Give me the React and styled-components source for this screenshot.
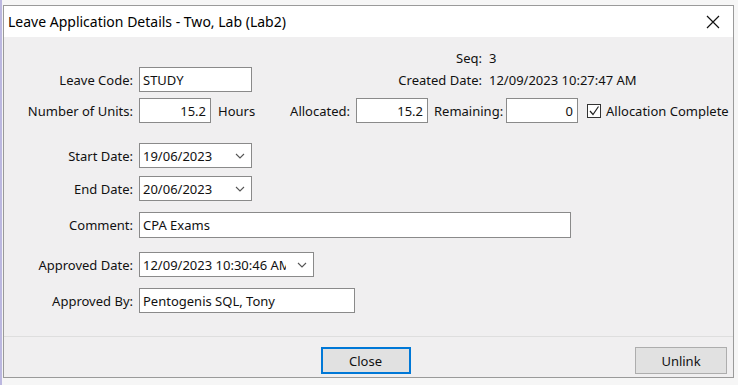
import React from "react";
import styled, { createGlobalStyle } from "styled-components";

const GlobalStyle = createGlobalStyle`
  html, body {
    margin: 0;
    padding: 0;
    background: #f6f6f6;
  }
  body {
    font-family: "Noto Sans", "Open Sans", sans-serif;
    font-size: 13px;
    color: #111;
  }
`;

const Desktop = styled.div`
  width: 738px;
  height: 385px;
  box-sizing: border-box;
  padding: 5px 5px 0 1px;
  border-left: 2px solid #bcb8e0;
  overflow: hidden;
`;

const Dialog = styled.div`
  width: 731px;
  height: 373px;
  box-sizing: border-box;
  border: 1px solid #9a9a9a;
  background: #f0eff0;
  display: flex;
  flex-direction: column;
`;

const TitleBar = styled.div`
  height: 31px;
  background: #ffffff;
  display: flex;
  align-items: center;
  justify-content: space-between;
  padding: 0 12px 0 4px;
  font-size: 14px;
  color: #000;
`;

const CloseX = styled.button`
  border: none;
  background: none;
  padding: 0;
  width: 16px;
  height: 16px;
  display: flex;
  align-items: center;
  justify-content: center;
`;

const Body = styled.div`
  height: 299px;
  box-sizing: border-box;
  padding-top: 12px;
  display: flex;
  flex-direction: column;
`;

const Row = styled.div`
  display: flex;
  align-items: center;
  height: ${(p) => p.$h || 25}px;
  margin-top: ${(p) => p.$top || 0}px;
`;

const Label = styled.span`
  width: ${(p) => p.$w}px;
  flex: none;
  text-align: ${(p) => p.$align || "right"};
  margin-left: ${(p) => p.$ml || 0}px;
  margin-right: ${(p) => (p.$gap === undefined ? 6 : p.$gap)}px;
  white-space: nowrap;
`;

const Value = styled.span`
  white-space: nowrap;
`;

const TextBox = styled.div`
  width: ${(p) => p.$w}px;
  height: ${(p) => p.$h || 25}px;
  flex: none;
  box-sizing: border-box;
  border: 1px solid #8a8a8a;
  background: #fff;
  display: flex;
  align-items: center;
  justify-content: ${(p) => (p.$right ? "flex-end" : "flex-start")};
  padding: 0 4px 0 3px;
  white-space: nowrap;
  overflow: hidden;
  margin-right: ${(p) => p.$mr || 0}px;
`;

const DateBox = styled(TextBox)`
  padding-right: 0;
`;

const DateText = styled.span`
  flex: 1;
  max-width: ${(p) => (p.$max ? `${p.$max}px` : "none")};
  overflow: hidden;
  white-space: nowrap;
`;

const Drop = styled.span`
  width: 22px;
  margin-left: auto;
  flex: none;
  display: flex;
  align-items: center;
  justify-content: center;
`;

const Check = styled.span`
  width: 14px;
  height: 14px;
  box-sizing: border-box;
  border: 1px solid #333;
  background: #fff;
  display: flex;
  align-items: center;
  justify-content: center;
  margin: 0 5px 0 9px;
  flex: none;
`;

const Footer = styled.div`
  flex: 1;
  border-top: 1px solid #dedede;
  display: grid;
  grid-template-columns: 1fr auto 1fr;
  align-items: start;
  padding: 10px 6px 0 0;
`;

const Button = styled.button`
  grid-column: ${(p) => p.$col};
  justify-self: ${(p) => (p.$col === 3 ? "end" : "center")};
  width: ${(p) => p.$w}px;
  height: 27px;
  box-sizing: border-box;
  font: inherit;
  color: #111;
  background: #e1e1e1;
  border: ${(p) => (p.$primary ? "2px solid #0078d7" : "1px solid #adadad")};
  padding: 0;
`;

const Chevron = () => (
  <svg width="10" height="6" viewBox="0 0 10 6">
    <path d="M1 1 L5 5 L9 1" fill="none" stroke="#555" strokeWidth="1.1" />
  </svg>
);

const DatePicker = ({ w, value, max }) => (
  <DateBox $w={w}>
    <DateText $max={max}>{value}</DateText>
    <Drop>
      <Chevron />
    </Drop>
  </DateBox>
);

export default function App() {
  return (
    <>
      <GlobalStyle />
      <Desktop>
        <Dialog>
          <TitleBar>
            <span>Leave Application Details - Two, Lab (Lab2)</span>
            <CloseX aria-label="Close">
              <svg width="14" height="14" viewBox="0 0 14 14">
                <path d="M1 1 L13 13 M13 1 L1 13" stroke="#111" strokeWidth="1.2" />
              </svg>
            </CloseX>
          </TitleBar>
          <Body>
            <Row $h={18}>
              <Label $w={478} $gap={7}>Seq:</Label>
              <Value>3</Value>
            </Row>
            <Row>
              <Label $w={129}>Leave Code:</Label>
              <TextBox $w={113}>STUDY</TextBox>
              <Label $w={230} $gap={7}>Created Date:</Label>
              <Value>12/09/2023 10:27:47 AM</Value>
            </Row>
            <Row $top={6}>
              <Label $w={129}>Number of Units:</Label>
              <TextBox $w={72} $right>15.2</TextBox>
              <Label $w={62} $align="left" $gap={0} $ml={7}>Hours</Label>
              <Label $w={70}>Allocated:</Label>
              <TextBox $w={72} $right $mr={6}>15.2</TextBox>
              <Label $w={66}>Remaining:</Label>
              <TextBox $w={72} $right>0</TextBox>
              <Check>
                <svg width="12" height="12" viewBox="0 0 12 12">
                  <path d="M2 6 L5 9.5 L10.5 1.5" fill="none" stroke="#222" strokeWidth="1.2" />
                </svg>
              </Check>
              <Value>Allocation Complete</Value>
            </Row>
            <Row $top={20}>
              <Label $w={129}>Start Date:</Label>
              <DatePicker w={113} value="19/06/2023" />
            </Row>
            <Row $top={8}>
              <Label $w={129}>End Date:</Label>
              <DatePicker w={113} value="20/06/2023" />
            </Row>
            <Row $top={11} $h={26}>
              <Label $w={129}>Comment:</Label>
              <TextBox $w={432} $h={26}>CPA Exams</TextBox>
            </Row>
            <Row $top={14}>
              <Label $w={129}>Approved Date:</Label>
              <DatePicker w={175} value="12/09/2023 10:30:46 AM" max={143} />
            </Row>
            <Row $top={11}>
              <Label $w={129}>Approved By:</Label>
              <TextBox $w={216}>Pentogenis SQL, Tony</TextBox>
            </Row>
          </Body>
          <Footer>
            <Button $col={2} $w={90} $primary>Close</Button>
            <Button $col={3} $w={92}>Unlink</Button>
          </Footer>
        </Dialog>
      </Desktop>
    </>
  );
}
